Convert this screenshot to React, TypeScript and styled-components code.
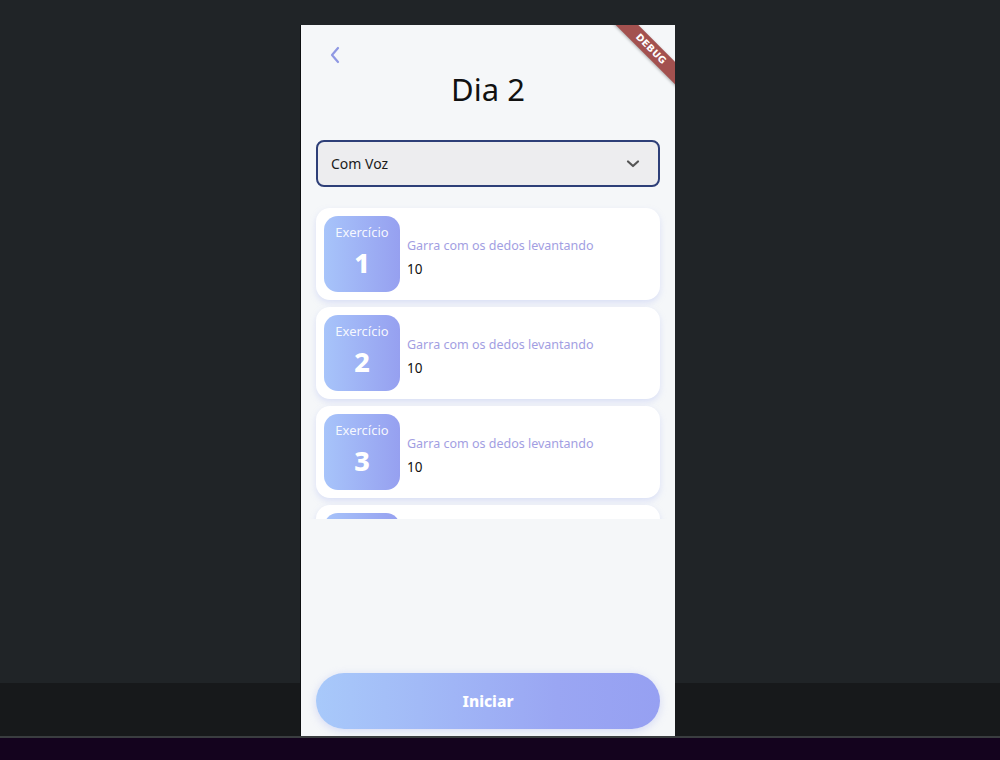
import React from 'react'
import styled, { createGlobalStyle } from 'styled-components'

const GlobalStyle = createGlobalStyle`
  html, body {
    margin: 0;
    padding: 0;
  }
  body {
    font-family: 'Noto Sans', 'Open Sans', sans-serif;
  }
`

const exercises = [
  { id: 1, name: 'Garra com os dedos levantando', reps: 10 },
  { id: 2, name: 'Garra com os dedos levantando', reps: 10 },
  { id: 3, name: 'Garra com os dedos levantando', reps: 10 },
  { id: 4, name: 'Garra com os dedos levantando', reps: 10 },
]

const Page = styled.div`
  width: 1000px;
  height: 760px;
  overflow: hidden;
  padding: 25px 0 0 300px;
  box-sizing: border-box;
  background: linear-gradient(
    to bottom,
    #202427 0,
    #202427 683px,
    #17191b 683px,
    #17191b 736px,
    #3a3d40 736px,
    #3a3d40 738px,
    #14031e 738px
  );
`

const Phone = styled.div`
  position: relative;
  width: 375px;
  height: 711px;
  box-sizing: border-box;
  border-left: 1px solid #0e1012;
  background: #f5f7f9;
  overflow: hidden;
  display: flex;
  flex-direction: column;
  padding: 0 15px 7px 15px;
`

const DebugRibbon = styled.div`
  position: absolute;
  top: 16px;
  right: -26px;
  width: 100px;
  height: 16px;
  background: #a3514f;
  color: #fff;
  font-family: 'DejaVu Sans', sans-serif;
  font-weight: bold;
  font-size: 9.5px;
  letter-spacing: 0.3px;
  line-height: 16px;
  text-align: center;
  transform: rotate(45deg);
  box-shadow: 0 1px 3px rgba(0, 0, 0, 0.3);
`

const Header = styled.div`
  display: flex;
  flex-direction: column;
  padding-top: 20px;
`

const BackButton = styled.button`
  width: 30px;
  height: 20px;
  border: none;
  background: none;
  padding: 0;
  margin-left: 13px;
  display: flex;
  align-items: center;
  cursor: pointer;
`

const Title = styled.h1`
  margin: 2px 0 0 0;
  text-align: center;
  font-size: 31px;
  font-weight: 400;
  color: #111;
  line-height: 44px;
`

const Select = styled.div`
  margin-top: 29px;
  height: 47px;
  box-sizing: border-box;
  border: 2px solid #2e3f78;
  border-radius: 8px;
  background: #ededef;
  display: flex;
  align-items: center;
  justify-content: space-between;
  padding: 0 18px 0 13px;
  font-size: 14px;
  color: #1b1b1b;
`

const List = styled.div`
  margin: 17px -15px 0 -15px;
  padding: 4px 15px 0 15px;
  height: 311px;
  overflow: hidden;
  display: flex;
  flex-direction: column;
  gap: 7px;
`

const Card = styled.div`
  flex-shrink: 0;
  height: 92px;
  box-sizing: border-box;
  background: #fff;
  border-radius: 14px;
  box-shadow: 0 3px 6px rgba(170, 180, 240, 0.35);
  display: flex;
  align-items: center;
  padding: 0 8px;
  gap: 7px;
`

const Badge = styled.div`
  width: 76px;
  height: 76px;
  border-radius: 14px;
  background: linear-gradient(to right, #a7c4fa, #96a0f0);
  display: flex;
  flex-direction: column;
  align-items: center;
  color: #fff;
`

const BadgeLabel = styled.span`
  margin-top: 8px;
  font-size: 13px;
  line-height: 16px;
  color: rgba(255, 255, 255, 0.92);
`

const BadgeNumber = styled.span`
  margin-top: 7px;
  font-size: 27px;
  font-weight: 800;
  line-height: 32px;
`

const Info = styled.div`
  display: flex;
  flex-direction: column;
  gap: 6px;
  margin-top: 6px;
`

const ExerciseName = styled.span`
  font-size: 12.5px;
  color: #a29ee2;
`

const Reps = styled.span`
  font-size: 13.5px;
  color: #111;
`

const Spacer = styled.div`
  flex: 1;
`

const StartButton = styled.button`
  height: 56px;
  border: none;
  border-radius: 28px;
  background: linear-gradient(to right, #a8c9fa, #9aa6f3 70%, #96a0f2);
  box-shadow: 0 2px 8px rgba(170, 180, 240, 0.45);
  color: #fff;
  font-family: 'Noto Sans', sans-serif;
  font-size: 15.5px;
  font-weight: 800;
  cursor: pointer;
`

const ChevronLeft = () => (
  <svg width="12" height="18" viewBox="0 0 12 18" fill="none">
    <path d="M9 2 L3 9 L9 16" stroke="#8f98e3" strokeWidth="2.2" strokeLinecap="round" strokeLinejoin="round" />
  </svg>
)

const ChevronDown = () => (
  <svg width="14" height="10" viewBox="0 0 14 10" fill="none">
    <path d="M2 2.5 L7 7 L12 2.5" stroke="#555" strokeWidth="2.2" strokeLinecap="round" strokeLinejoin="round" />
  </svg>
)

const App = () => {
  return (
    <Page>
      <GlobalStyle />
      <Phone>
        <DebugRibbon>DEBUG</DebugRibbon>
        <Header>
          <BackButton aria-label="Voltar">
            <ChevronLeft />
          </BackButton>
          <Title>Dia 2</Title>
        </Header>
        <Select>
          <span>Com Voz</span>
          <ChevronDown />
        </Select>
        <List>
          {exercises.map((ex) => (
            <Card key={ex.id}>
              <Badge>
                <BadgeLabel>Exercício</BadgeLabel>
                <BadgeNumber>{ex.id}</BadgeNumber>
              </Badge>
              <Info>
                <ExerciseName>{ex.name}</ExerciseName>
                <Reps>{ex.reps}</Reps>
              </Info>
            </Card>
          ))}
        </List>
        <Spacer />
        <StartButton>Iniciar</StartButton>
      </Phone>
    </Page>
  )
}

export default App
